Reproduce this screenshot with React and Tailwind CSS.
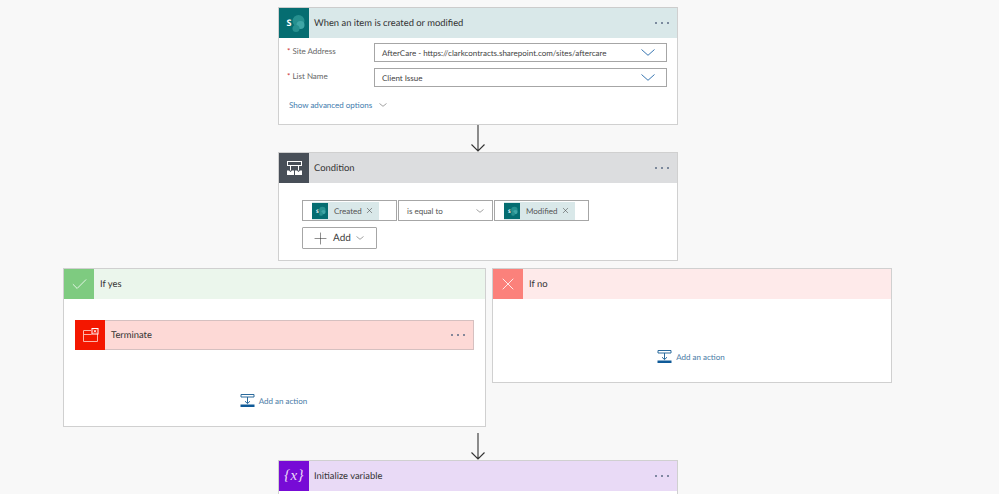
import { Check, X, Plus } from 'lucide-react';

const FONT = "font-['Lato','Open_Sans',sans-serif] [text-rendering:geometricPrecision]";

function Chevron({ w = 14, h = 7, color = '#2266a8', className = '' }) {
  return (
    <svg width={w} height={h} viewBox={`0 0 ${w} ${h}`} className={`shrink-0 block ${className}`}>
      <path d={`M0.5 0.5L${w / 2} ${h - 0.7}L${w - 0.5} 0.5`} fill="none" stroke={color} strokeWidth="0.9" />
    </svg>
  );
}

function SharePointIcon({ size = 30 }) {
  return (
    <svg width={size} height={size} viewBox="0 0 30 30" className="shrink-0 block">
      <rect width="30" height="30" fill="#056d71" />
      <circle cx="19.5" cy="13" r="6" fill="#26908f" />
      <circle cx="21.5" cy="17" r="4" fill="#3fa6a6" />
      <circle cx="17" cy="20.5" r="3.5" fill="#26908f" />
      <text x="10" y="18" textAnchor="middle" fontSize="9" fontWeight="700" fill="#fff" fontFamily="Open Sans">S</text>
    </svg>
  );
}

function ConditionIcon() {
  return (
    <svg width="30" height="30" viewBox="0 0 30 30" className="shrink-0 block">
      <rect width="30" height="30" fill="#484f58" />
      <g fill="none" stroke="#fff" strokeWidth="1">
        <rect x="8.5" y="8.5" width="14" height="4" />
        <path d="M11.5 12.5v5M19.5 12.5v5" />
      </g>
      <path d="M8 17.5h2l1.5 1.5 1.5-1.5h2V22H8zM16 17.5h2l1.5 1.5 1.5-1.5h2V22h-7z" fill="#fff" />
    </svg>
  );
}

function TerminateIcon() {
  return (
    <svg width="30" height="30" viewBox="0 0 30 30" className="shrink-0 block">
      <rect width="30" height="30" fill="#f41700" />
      <path d="M8.5 10.5h7.5M8.5 14.5h8M8.5 10.5v11h14v-7.5" fill="none" stroke="#fdb4a8" strokeWidth="1" />
      <rect x="17" y="8.5" width="6" height="5.5" fill="none" stroke="#fff" strokeWidth="1" />
      <path d="M18.7 10l2.6 2.5M21.3 10l-2.6 2.5" stroke="#fff" strokeWidth="0.9" />
    </svg>
  );
}

function VariableIcon() {
  return (
    <div className="w-[30px] h-[30px] shrink-0 bg-[#770bd6] flex items-center justify-center text-[#ecdcf8] text-[15px] font-['Liberation_Serif',serif] italic tracking-[0.5px]">
      {'{x}'}
    </div>
  );
}

function InsertIcon() {
  return (
    <svg width="15" height="15" viewBox="0 0 15 15" className="shrink-0 block">
      <path d="M1 1.5h13v2.5H1z" fill="none" stroke="#2b6a9c" strokeWidth="1" />
      <path d="M7.5 4v6.5M5 8.2l2.5 2.4L10 8.2" fill="none" stroke="#2b6a9c" strokeWidth="1" />
      <rect x="0.5" y="11.5" width="14" height="2.5" fill="#0f5a98" />
    </svg>
  );
}

function Dots() {
  return (
    <div className="ml-auto mr-[8px] flex gap-[4px]">
      <span className="w-[2px] h-[2px] bg-[#5b6b85] rounded-full" />
      <span className="w-[2px] h-[2px] bg-[#5b6b85] rounded-full" />
      <span className="w-[2px] h-[2px] bg-[#5b6b85] rounded-full" />
    </div>
  );
}

function Arrow({ height, className = '' }) {
  return (
    <div className={`flex justify-center ${className}`}>
      <svg width="15" height={height} viewBox={`0 0 15 ${height}`} className="block">
        <path d={`M7 0V${height - 1}M0.5 ${height - 7.5}L7 ${height - 1}L13.5 ${height - 7.5}`} fill="none" stroke="#333" strokeWidth="1.1" />
      </svg>
    </div>
  );
}

function CardHeader({ icon, title, bg, dots = true, titleMl = 'ml-[5px]' }) {
  return (
    <div className={`flex items-center h-[30px] ${bg}`}>
      {icon}
      <span className={`${titleMl} pt-[2px] text-[9.4px] text-[#333] whitespace-nowrap`}>{title}</span>
      {dots && <Dots />}
    </div>
  );
}

function FieldRow({ label, value }) {
  return (
    <div className="flex items-start h-[19px]">
      <div className="w-[95px] pl-[8px] pt-[1px] text-[8px] text-[#666] leading-[14px] whitespace-nowrap">
        <span className="text-[#c33]">*</span> {label}
      </div>
      <div className="w-[293px] h-[19px] border border-[#a6a6a6] flex items-center pl-[7px] pr-[11px] text-[8px] text-[#444] whitespace-nowrap">
        <span>{value}</span>
        <Chevron className="ml-auto" />
      </div>
    </div>
  );
}

function Token({ label }) {
  return (
    <div className="h-[18px] flex items-center bg-[#d9e8e9] pr-[5px]">
      <SharePointIcon size={16} />
      <span className="ml-[6px] text-[8px] text-[#555] whitespace-nowrap">{label}</span>
      <X size={9} strokeWidth={1.4} className="ml-[3px] text-[#444]" />
    </div>
  );
}

function AddAction({ className }) {
  return (
    <div className={`flex items-center justify-center gap-[4px] -translate-x-[1px] ${className}`}>
      <InsertIcon />
      <span className="text-[8px] text-[#4a7ba6] whitespace-nowrap">Add an action</span>
    </div>
  );
}

export default function App() {
  return (
    <div className={`h-[494px] w-[999px] overflow-hidden bg-[#f8f8f8] pt-[7px] ${FONT}`}>
      <div className="ml-[278px] w-[400px] h-[118px] bg-white border border-[#d0d0d0] border-t-[#ccc]">
        <CardHeader icon={<SharePointIcon />} title="When an item is created or modified" bg="bg-[#d9e8e9]" />
        <div className="pt-[5px] flex flex-col gap-[6px]">
          <FieldRow label="Site Address" value="AfterCare - https://clarkcontracts.sharepoint.com/sites/aftercare" />
          <FieldRow label="List Name" value="Client Issue" />
        </div>
        <div className="mt-[12px] ml-[10px] flex items-center gap-[7px] text-[8px] text-[#3f7cae]">
          Show advanced options
          <Chevron w={8} h={4} color="#999" />
        </div>
      </div>

      <Arrow height={27} className="w-[400px] ml-[278px]" />

      <div className="ml-[278px] w-[400px] h-[109px] bg-white border border-[#d0d0d0]">
        <CardHeader icon={<ConditionIcon />} title="Condition" bg="bg-[#dcdddf]" />
        <div className="pl-[23px] pt-[17px]">
          <div className="flex gap-[1px]">
            <div className="w-[95px] h-[21px] border border-[#a6a6a6] pl-[9px] flex items-center">
              <Token label="Created" />
            </div>
            <div className="w-[95px] h-[21px] border border-[#a6a6a6] pl-[8px] pr-[8px] flex items-center text-[8px] text-[#555]">
              is equal to
              <Chevron w={8} h={4} color="#999" className="ml-auto" />
            </div>
            <div className="w-[95px] h-[21px] border border-[#a6a6a6] pl-[9px] flex items-center">
              <Token label="Modified" />
            </div>
          </div>
          <div className="mt-[6px] w-[75px] h-[22px] border border-[#a6a6a6] rounded-[1px] flex items-center pl-[10px] text-[10px] text-[#444]">
            <Plus size={19} strokeWidth={0.7} className="text-[#333] -mx-[2px]" />
            <span className="ml-[5px]">Add</span>
            <Chevron w={8} h={4} color="#999" className="ml-[5px]" />
          </div>
        </div>
      </div>

      <div className="ml-[63px] mt-[7px] flex gap-[6px] items-start">
        <div className="w-[423px] h-[159px] bg-white border border-[#d0d0d0]">
          <CardHeader
            icon={<div className="w-[30px] h-[30px] bg-[#7ecb80] flex items-center justify-center"><Check size={19} strokeWidth={1} className="text-white" /></div>}
            title="If yes"
            bg="bg-[#ebf6ec]"
            dots={false}
            titleMl="ml-[6px]"
          />
          <div className="mx-[11px] mt-[21px] h-[30px] border border-[#d5c0c0] border-l-0 bg-[#fdd9d6] flex items-center">
            <CardHeader icon={<TerminateIcon />} title="Terminate" bg="w-full" titleMl="ml-[6px]" />
          </div>
          <AddAction className="mt-[43px]" />
        </div>

        <div className="w-[400px] h-[115px] bg-white border border-[#d0d0d0]">
          <CardHeader
            icon={<div className="w-[30px] h-[30px] bg-[#fb817b] flex items-center justify-center"><X size={20} strokeWidth={1} className="text-white" /></div>}
            title="If no"
            bg="bg-[#feeaea]"
            dots={false}
            titleMl="ml-[6px]"
          />
          <AddAction className="mt-[50px]" />
        </div>
      </div>

      <Arrow height={27} className="w-[400px] ml-[278px] mt-[6px]" />

      <div className="ml-[278px] w-[400px] h-[60px] bg-white border border-[#d0d0d0]">
        <CardHeader icon={<VariableIcon />} title="Initialize variable" bg="bg-[#e9daf6]" />
      </div>
    </div>
  );
}
